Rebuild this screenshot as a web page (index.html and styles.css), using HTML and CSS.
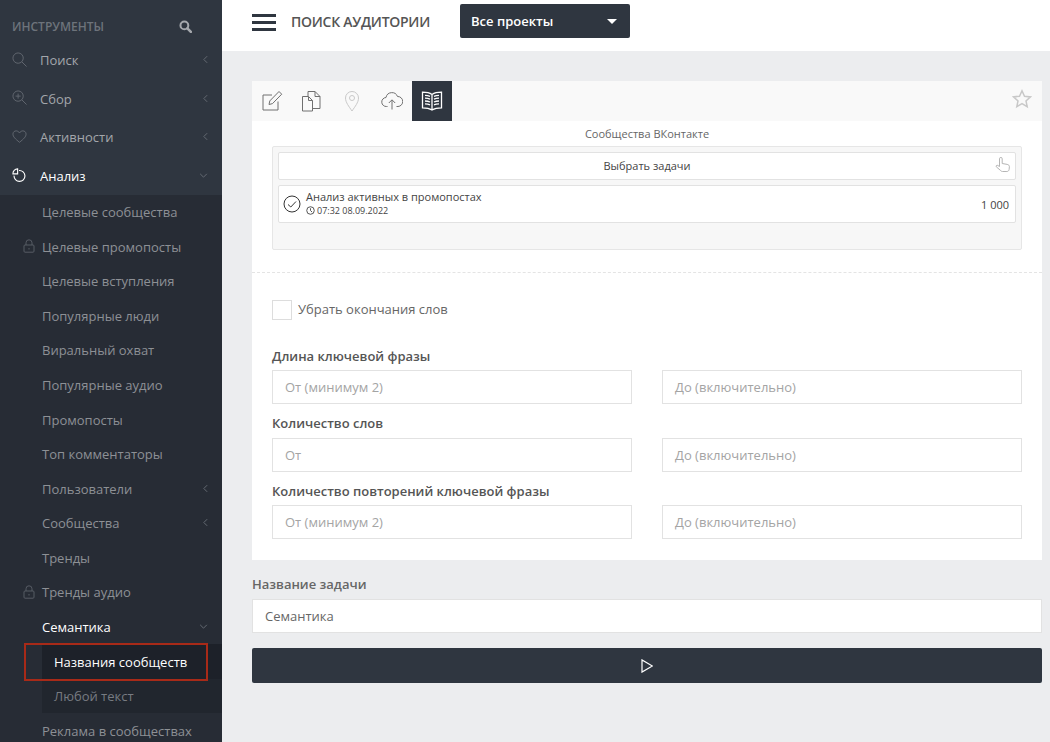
FILE: index.html
```html
<!DOCTYPE html>
<html lang="ru">

<head>
    <meta charset="UTF-8">
    <title>Поиск аудитории</title>
    <link rel="stylesheet" href="styles.css">
</head>

<body>
    <aside class="sidebar">
        <div class="side-head">
            <span>ИНСТРУМЕНТЫ</span>
            <svg class="side-search" viewBox="0 0 14 14"><circle cx="5.8" cy="5.8" r="4.2" fill="none" stroke="currentColor" stroke-width="2.2"/><path d="M9 9l3.8 3.8" stroke="currentColor" stroke-width="2.8" stroke-linecap="round"/></svg>
        </div>
        <a class="top-item"><svg class="top-icon" viewBox="0 0 16 16"><circle cx="6.5" cy="6.5" r="5.5"/><path d="M10.5 10.5l5 5"/></svg>Поиск<svg class="arrow" viewBox="0 0 6 10"><path d="M5 1L1 5l4 4"/></svg></a>
        <a class="top-item"><svg class="top-icon" viewBox="0 0 16 16"><circle cx="6.5" cy="6.5" r="5.5"/><path d="M10.5 10.5l5 5M6.5 3.8v5.4M3.8 6.500h5.400"/></svg>Сбор<svg class="arrow" viewBox="0 0 6 10"><path d="M5 1L1 5l4 4"/></svg></a>
        <a class="top-item"><svg class="top-icon" viewBox="0 0 16 16"><path d="M8 14.200C3.500 10.500 1 8.300 1 5.400 1 3.200 2.700 2 4.400 2 5.900 2 7.200 2.800 8 4.200 8.800 2.800 10.100 2 11.600 2 13.300 2 15 3.200 15 5.400c0 2.900-2.500 5.100-7 8.800z"/></svg>Активности<svg class="arrow" viewBox="0 0 6 10"><path d="M5 1L1 5l4 4"/></svg></a>
        <a class="top-item open"><svg class="top-icon" viewBox="0 0 16 16"><path d="M7.500 3.800A5.800 5.800 0 1 1 2.200 9.200"/><path d="M1 7.300A5 5 0 0 1 6 2v5.300z"/></svg>Анализ<svg class="arrow down" viewBox="0 0 10 6"><path d="M1 1l4 4 4-4"/></svg></a>
        <div class="submenu">
            <a class="sub-item">Целевые сообщества</a>
            <a class="sub-item"><svg class="lock" viewBox="0 0 12 14"><rect x="1" y="6" width="10" height="7.200" rx="1"/><path d="M3 6V3.800a3 3 0 0 1 6 0V6M6 9v1.500"/></svg>Целевые промопосты</a>
            <a class="sub-item">Целевые вступления</a>
            <a class="sub-item">Популярные люди</a>
            <a class="sub-item">Виральный охват</a>
            <a class="sub-item">Популярные аудио</a>
            <a class="sub-item">Промопосты</a>
            <a class="sub-item">Топ комментаторы</a>
            <a class="sub-item">Пользователи<svg class="arrow" viewBox="0 0 6 10"><path d="M5 1L1 5l4 4"/></svg></a>
            <a class="sub-item">Сообщества<svg class="arrow" viewBox="0 0 6 10"><path d="M5 1L1 5l4 4"/></svg></a>
            <a class="sub-item">Тренды</a>
            <a class="sub-item"><svg class="lock" viewBox="0 0 12 14"><rect x="1" y="6" width="10" height="7.200" rx="1"/><path d="M3 6V3.800a3 3 0 0 1 6 0V6M6 9v1.500"/></svg>Тренды аудио</a>
            <a class="sub-item current">Семантика<svg class="arrow down" viewBox="0 0 10 6"><path d="M1 1l4 4 4-4"/></svg></a>
            <div class="nested">
                <a class="nested-item current">Названия сообществ</a>
                <a class="nested-item">Любой текст</a>
            </div>
            <a class="sub-item">Реклама в сообществах</a>
        </div>
        <div class="red-mark"></div>
    </aside>

    <div class="page">
        <header class="topbar">
            <div class="burger"><i></i><i></i><i></i></div>
            <div class="page-title">ПОИСК АУДИТОРИИ</div>
            <div class="project-btn">Все проекты<span class="caret"></span></div>
        </header>

        <main class="content">
            <section class="panel">
                <div class="tabs">
                    <div class="tab"><svg viewBox="0 0 22 22"><path d="M17 11.500V20H2V5h9"/><path d="M8 14.500l.8-3.600L18 1.500l2.700 2.700-9.200 9.400z"/></svg></div>
                    <div class="tab"><svg viewBox="0 0 22 22"><path d="M1.500 6.500h6l4 4V21h-10zM7.500 6.500v4h4"/><path d="M7 6V1.500h7l5 5v12h-7.500M14 1.500v5h5"/></svg></div>
                    <div class="tab faded"><svg viewBox="0 0 22 22"><path d="M11 21c-3-4.500-6.500-8.500-6.500-13a6.500 6.500 0 0 1 13 0c0 4.500-3.500 8.500-6.500 13z"/><circle cx="11" cy="8" r="2.500"/></svg></div>
                    <div class="tab"><svg viewBox="0 0 22 22"><path d="M6.500 16.500H5.500a4.500 4.500 0 0 1-.5-9 6 6 0 0 1 11.500-1 5 5 0 0 1 .5 10h-1.500"/><path d="M11 19.500V10M7.800 13L11 9.800l3.200 3.200"/></svg></div>
                    <div class="tab active"><svg viewBox="0 0 22 22"><path d="M11 4.500C8.500 2.800 5 2.200 1.500 2.200v15.600c3.500 0 7 .6 9.500 2.200 2.500-1.600 6-2.200 9.500-2.200V2.200c-3.500 0-7 .6-9.500 2.300zM11 4.500V20"/><path d="M4 5.400c1.800 0 3.600.3 5 1M4 8.200c1.800 0 3.600.3 5 1M4 11c1.800 0 3.600.3 5 1M4 13.800c1.800 0 3.600.3 5 1M18 5.400c-1.800 0-3.600.3-5 1M18 8.200c-1.800 0-3.600.3-5 1M18 11c-1.800 0-3.600.3-5 1M18 13.800c-1.800 0-3.600.3-5 1"/></svg></div>
                    <svg class="star" viewBox="0 0 20 20"><path d="M10 1.800l2.500 5.400 5.900.7-4.400 4 1.200 5.800-5.200-3-5.200 3 1.200-5.800-4.400-4 5.900-.7z"/></svg>
                </div>
                <div class="source-title">Сообщества ВКонтакте</div>
                <div class="source-box">
                    <div class="pick-btn">Выбрать задачи
                        <svg class="hand" viewBox="-0.5 -0.5 16 16"><path d="M4 9V1.300a1.300 1.300 0 0 1 2.700 0V6l5 .9c1.400.3 2.200 1.100 2.200 2.300L13.600 12c-.2 1.200-1 2-2.200 2H7c-.8 0-1.400-.4-1.900-1L.8 9.300c-.7-.9.6-2.100 1.500-1.300z"/></svg>
                    </div>
                    <div class="task-row">
                        <svg class="task-check" viewBox="0 0 18 18"><circle cx="9" cy="9" r="8"/><path d="M5 9.500l2.800 2.500L13 6.500"/></svg>
                        <div class="task-info">
                            <div class="task-name">Анализ активных в промопостах</div>
                            <div class="task-date"><svg viewBox="0 0 10 10"><circle cx="5" cy="5" r="4.200"/><path d="M5 2.500V5l1.800 1.800"/></svg>07:32 08.09.2022</div>
                        </div>
                        <div class="task-count">1 000</div>
                    </div>
                </div>
                <div class="form-part">
                    <label class="check-row"><span class="checkbox"></span>Убрать окончания слов</label>
                    <div class="field-label first">Длина ключевой фразы</div>
                    <div class="field-row">
                        <div class="input placeholder">От (минимум 2)</div>
                        <div class="input placeholder">До (включительно)</div>
                    </div>
                    <div class="field-label">Количество слов</div>
                    <div class="field-row">
                        <div class="input placeholder">От</div>
                        <div class="input placeholder">До (включительно)</div>
                    </div>
                    <div class="field-label">Количество повторений ключевой фразы</div>
                    <div class="field-row">
                        <div class="input placeholder">От (минимум 2)</div>
                        <div class="input placeholder">До (включительно)</div>
                    </div>
                </div>
            </section>
            <div class="name-label">Название задачи</div>
            <div class="input name-input">Семантика</div>
            <div class="run-btn"><svg viewBox="0 0 12 14"><path d="M1 .9v12.200L11.400 7z"/></svg></div>
        </main>
    </div>
</body>

</html>
```

FILE: styles.css
```css
html,
body {
    margin: 0;
    height: 742px;
    overflow: hidden;
}

body {
    display: flex;
    font-family: 'Open Sans', sans-serif;
    font-size: 13px;
    color: #555;
    background-color: #ecedef;
}

svg {
    display: block;
    fill: none;
}

/* левое меню */
.sidebar {
    position: relative;
    flex: none;
    width: 222px;
    height: 742px;
    overflow: hidden;
    background-color: #2f3640;
}

.side-head {
    display: flex;
    align-items: center;
    justify-content: space-between;
    height: 52px;
    padding: 0 30px 0 12px;
    font-size: 12px;
    font-weight: 600;
    color: #6d737b;
}

.side-search {
    width: 13px;
    height: 13px;
    color: #a5a8ad;
}

.top-item {
    position: relative;
    display: flex;
    align-items: center;
    height: 38.500px;
    padding-left: 40px;
    color: #a3a6ab;
}

.top-item:first-of-type {
    margin-top: -11.100px;
}

.top-item.open {
    color: #fff;
}

.top-icon {
    position: absolute;
    left: 12px;
    top: 11px;
    width: 15px;
    height: 15px;
    stroke: #636971;
    stroke-width: 1;
}

.open .top-icon {
    stroke: #fff;
    stroke-width: 1.200;
}

.arrow {
    position: absolute;
    right: 14px;
    top: 50%;
    width: 5px;
    height: 9px;
    margin-top: -5px;
    stroke: #646a72;
    stroke-width: 1.200;
}

.arrow.down {
    right: 14px;
    width: 9px;
    height: 5px;
    margin-top: -3px;
}

.submenu {
    margin-top: -0.120px;
    background-color: #272c35;
}

.sub-item {
    position: relative;
    display: flex;
    align-items: center;
    height: 34.580px;
    padding-left: 42px;
    color: #8d9095;
}

.sub-item.current {
    color: #fff;
}

.lock {
    position: absolute;
    left: 23px;
    top: 10px;
    width: 12px;
    height: 14px;
    stroke: #575c65;
    stroke-width: 1;
}

.nested {
    margin-left: 42px;
    background-color: #21262e;
}

.nested-item {
    display: flex;
    align-items: center;
    height: 34.580px;
    padding-left: 12px;
    color: #777b82;
}

.nested-item.current {
    color: #fff;
    background-color: #1d2129;
}

.red-mark {
    position: absolute;
    left: 24px;
    top: 643px;
    width: 180px;
    height: 34px;
    border: 2px solid #a82a18;
}

/* шапка */
.page {
    flex: 1;
    min-width: 0;
}

.topbar {
    display: flex;
    align-items: center;
    height: 51px;
    padding-bottom: 9px;
    box-sizing: border-box;
    background-color: #fff;
}

.burger {
    display: flex;
    flex-direction: column;
    gap: 4px;
    width: 24px;
    margin: 3px 0 0 30px;
}

.burger i {
    display: block;
    height: 3px;
    background-color: #2f3640;
}

.page-title {
    margin: 1px 30px 0 15px;
    font-size: 14px;
    font-weight: 600;
    letter-spacing: -0.270px;
    color: #555;
}

.project-btn {
    position: relative;
    width: 170px;
    height: 34px;
    padding-left: 11px;
    box-sizing: border-box;
    line-height: 34px;
    font-weight: 600;
    color: #fff;
    background-color: #2f3640;
    border-radius: 2px;
}

.caret {
    position: absolute;
    right: 13px;
    top: 15px;
    border-top: 5px solid #fff;
    border-left: 5px solid transparent;
    border-right: 5px solid transparent;
}

/* контент */
.content {
    padding: 30px 8px 0 30px;
}

.panel {
    height: 479px;
    background-color: #fff;
}

.tabs {
    position: relative;
    display: flex;
    height: 40px;
    background-color: #f9f9f9;
}

.tab {
    display: flex;
    align-items: center;
    justify-content: center;
    width: 40px;
    height: 40px;
}

.tab svg {
    width: 22px;
    height: 22px;
    stroke: #707070;
    stroke-width: 1;
}

.tab.faded svg {
    stroke: #c9c9c9;
}

.tab.active {
    background-color: #2f3640;
}

.tab.active svg {
    stroke: #fff;
    stroke-width: 1.300;
}

.star {
    position: absolute;
    right: 10px;
    top: 8px;
    width: 20px;
    height: 20px;
    stroke: #c8c8c8;
    stroke-width: 1.500;
}

.source-title {
    height: 25px;
    line-height: 25px;
    font-size: 11px;
    text-align: center;
    color: #666;
}

.source-box {
    height: 92px;
    margin: 0 20px;
    padding: 5px;
    border: 1px solid #e6e6e6;
    border-radius: 2px;
    background-color: #f7f7f7;
}

.pick-btn {
    position: relative;
    height: 26px;
    line-height: 26px;
    font-size: 11px;
    text-align: center;
    color: #444;
    background-color: #fff;
    border: 1px solid #e2e2e2;
    border-radius: 2px;
}

.hand {
    position: absolute;
    right: 4px;
    top: 4px;
    width: 16px;
    height: 16px;
    stroke: #b5b5b5;
    stroke-width: 1;
}

.task-row {
    display: flex;
    align-items: center;
    height: 36px;
    margin-top: 5px;
    padding: 0 6px 0 4px;
    background-color: #fff;
    border: 1px solid #e2e2e2;
    border-radius: 2px;
    color: #444;
}

.task-check {
    width: 18px;
    height: 18px;
    margin-right: 5px;
    stroke: #333;
    stroke-width: 1;
}

.task-info {
    flex: 1;
}

.task-name {
    margin-top: -2px;
    font-size: 11px;
    line-height: 13px;
}

.task-date {
    display: flex;
    align-items: center;
    gap: 2px;
    margin-top: 1px;
    font-size: 9px;
    line-height: 13px;
}

.task-date svg {
    width: 9px;
    height: 9px;
    stroke: #444;
    stroke-width: 1;
}

.task-count {
    font-size: 11px;
}

.form-part {
    margin-top: 22px;
    padding: 27px 20px 0;
    border-top: 1px dashed #e4e4e4;
}

.check-row {
    display: flex;
    align-items: flex-start;
    gap: 6px;
    height: 20px;
    line-height: 18px;
    color: #666;
}

.checkbox {
    width: 18px;
    height: 18px;
    border: 1px solid #ddd;
}

.field-label {
    height: 17.500px;
    margin-top: 11px;
    line-height: 17px;
    font-weight: 600;
    color: #555;
}

.field-label.first {
    margin-top: 27.500px;
}

.field-row {
    display: grid;
    grid-template-columns: 360px 360px;
    gap: 30px;
    margin-top: 5px;
}

.input {
    height: 32px;
    padding-left: 12px;
    line-height: 32px;
    background-color: #fff;
    border: 1px solid #e2e2e2;
    color: #666;
}

.input.placeholder {
    color: #a4a4a4;
}

.name-label {
    height: 18px;
    margin-top: 15px;
    line-height: 18px;
    font-weight: 600;
    color: #666;
}

.name-input {
    margin-top: 6px;
}

.run-btn {
    display: flex;
    align-items: center;
    justify-content: center;
    height: 35px;
    margin-top: 15px;
    background-color: #2f3640;
    border-radius: 2px;
}

.run-btn svg {
    width: 12px;
    height: 14px;
    stroke: #fff;
    stroke-width: 1.200;
}
```
